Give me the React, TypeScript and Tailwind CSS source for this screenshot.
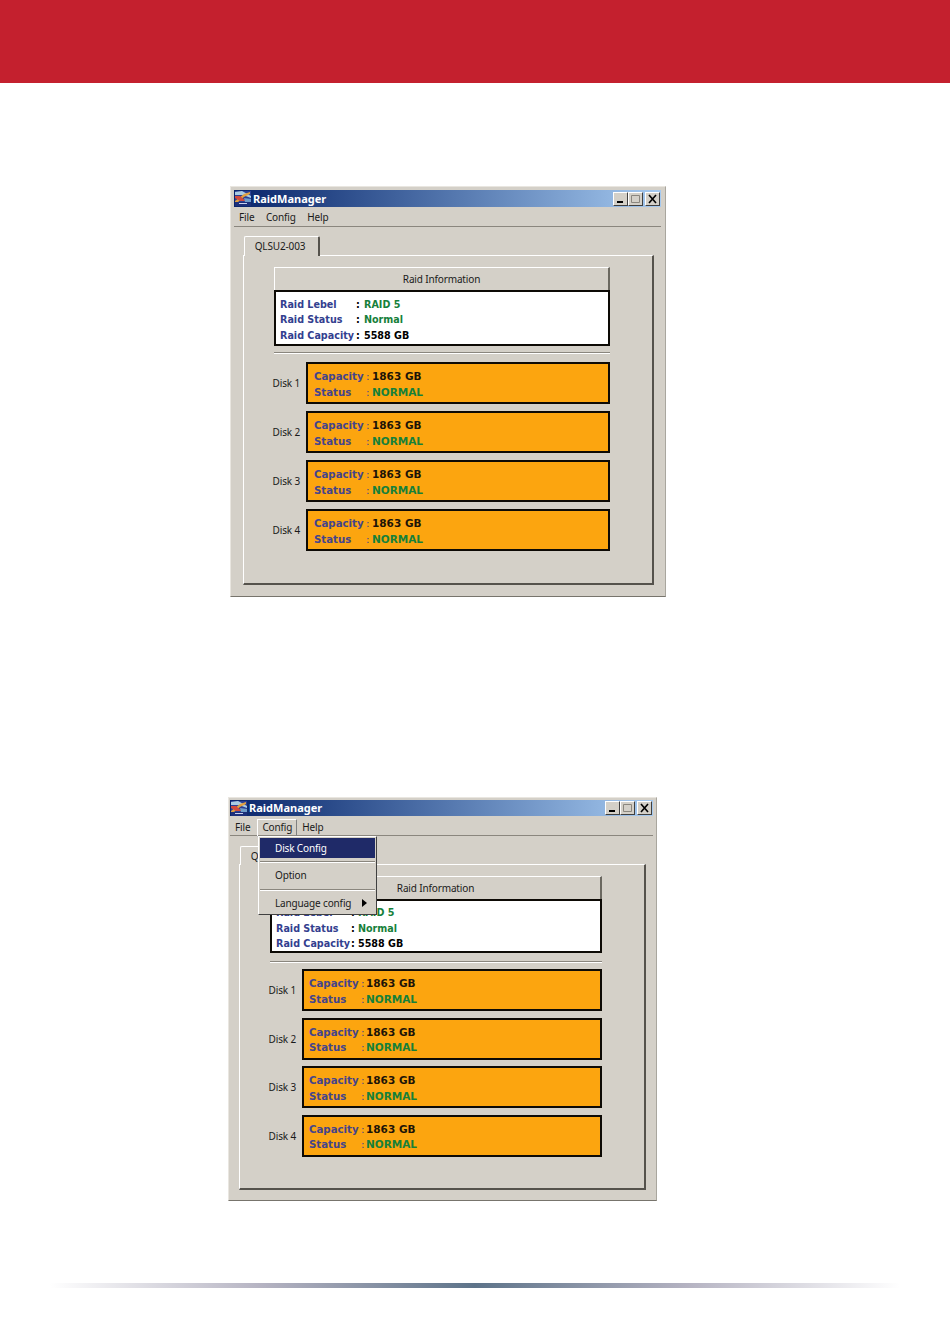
import React from "react";

type M = {
  outer: string; title: string; menu: string; menuItems: string; body: string; tab: string; panel: string;
  btn: string; info: string; infoGrid: string; sep: string; rows: string; box: string; boxGrid: string;
};

const A: M = {
  outer: "ml-[230px] mt-[103px] w-[436px] h-[411px] pt-[3px] pl-[3px] pr-[4px]",
  title: "h-[17px]",
  menu: "h-[19px] mt-[1px] pl-[5px]",
  menuItems: "gap-[11.5px]",
  body: "ml-[9px] mr-[7px] mt-[9px]",
  tab: "ml-[1px] w-[76px] h-[20px]",
  panel: "h-[330px] pl-[30px] pr-[10px] pt-[11px]",
  btn: "w-[336px] h-[23px]",
  info: "w-[336px] h-[56px] pl-[4px] pt-[4.5px]",
  infoGrid: "grid-cols-[76px_8px_1fr]",
  sep: "w-[336px] mt-[6px]",
  rows: "w-[336px] mt-[8px] gap-[7px]",
  box: "pl-[6px]",
  boxGrid: "grid-cols-[52px_6px_1fr]",
};

const B: M = {
  outer: "ml-[228px] mt-[200px] w-[429px] h-[404px] pt-[2px] pl-[1px] pr-[3px]",
  title: "h-[16px]",
  menu: "h-[18px] mt-[2px] pl-[5px] pt-[2px]",
  menuItems: "gap-[12px]",
  body: "ml-[9px] mr-[7px] mt-[10px]",
  tab: "ml-[1px] w-[76px] h-[19px]",
  panel: "h-[326px] pl-[30px] pr-[10px] pt-[11px]",
  btn: "w-[332px] h-[23px]",
  info: "w-[332px] h-[54px] pl-[4px] pt-[4px]",
  infoGrid: "grid-cols-[75px_7px_1fr]",
  sep: "w-[332px] mt-[8px]",
  rows: "w-[332px] mt-[6px] gap-[6.5px]",
  box: "pl-[5px]",
  boxGrid: "grid-cols-[52px_5px_1fr]",
};

const Logo = () => (
  <svg width="16" height="15" viewBox="0 0 16 15" className="shrink-0">
    <rect width="16" height="15" fill="#2a3f94" />
    <path d="M0 1 L7 0 L16 5 L16 7 L8 4 L0 4Z" fill="#a9cbe2" />
    <path d="M0 10 L9 3 L15 1 L15 3 L9 6 L3 11 L0 11Z" fill="#e0a040" />
    <path d="M0 5 L5 5 L11 10 L5 10 L0 7Z" fill="#d14a3c" />
    <path d="M9 7 L16 8 L16 11 L10 11Z" fill="#6f9dc8" />
    <rect x="0" y="11" width="16" height="4" fill="#1c2f7a" />
    <rect x="4" y="12" width="8" height="1" fill="#c8d0f0" />
  </svg>
);

const CapBtn = ({ kind }: { kind: "min" | "max" | "close" }) => (
  <div className="w-[15px] h-[14px] bg-[#d4d0c8] border-t border-l border-t-white border-l-white border-r border-b border-r-[#404040] border-b-[#404040] flex items-center justify-center">
    <svg width="11" height="10" viewBox="0 0 11 10">
      {kind === "min" && <rect x="2" y="7" width="6" height="2" fill="#000" />}
      {kind === "max" && <path d="M1.5 1.5h8v7h-8z" fill="none" stroke="#8a867e" />}
      {kind === "close" && <path d="M2 1 L9 9 M9 1 L2 9" stroke="#000" strokeWidth="1.6" />}
    </svg>
  </div>
);

const lf = "font-['DejaVu_Sans',sans-serif] font-bold whitespace-nowrap";
const ui = "font-['Noto_Sans',sans-serif] text-[10px] tracking-[-0.15px] text-[#1a1a1a] whitespace-nowrap";

const Disk = ({ n, m }: { n: number; m: M }) => (
  <div className="flex items-center h-[42px]">
    <div className={`${ui} flex justify-end w-[26px] mr-[6px] pt-[1px]`}>
      <span>Disk&nbsp;{n}</span>
    </div>
    <div className={`flex-1 h-[42px] bg-[#fca50f] border-2 border-[#0d0a05] pt-[5px] ${m.box}`}>
      <div className={`grid items-baseline text-[10.5px] leading-[15.5px] ${m.boxGrid} ${lf}`}>
        <span className="text-[#44448c] text-[10.2px]">Capacity</span>
        <span className="text-[#44448c] font-normal">:</span>
        <span className="text-[#1c1408]">1863 GB</span>
        <span className="text-[#44448c] text-[10.2px]">Status</span>
        <span className="text-[#44448c] font-normal">:</span>
        <span className="text-[#16803a]">NORMAL</span>
      </div>
    </div>
  </div>
);

const Menu = () => (
  <div className={`absolute left-[29px] top-[38px] w-[119px] h-[79px] bg-[#d4d0c8] border border-t-white border-l-white border-r-[#404040] border-b-[#404040] z-10 p-[1px] ${ui}`}>
    <div className="h-[20px] bg-[#1f2a68] text-white pl-[15px] flex items-center">Disk Config</div>
    <div className="mt-[3px] border-t border-t-[#8a867e] border-b border-b-white" />
    <div className="h-[22px] pl-[15px] mt-[1px] flex items-center">Option</div>
    <div className="mt-[3px] border-t border-t-[#8a867e] border-b border-b-white" />
    <div className="h-[22px] pl-[15px] mt-[1px] flex items-center justify-between pr-[8px]">
      <span>Language config</span>
      <svg width="5" height="8" viewBox="0 0 5 8"><path d="M0 0 L5 4 L0 8Z" fill="#000" /></svg>
    </div>
  </div>
);

const Win = ({ m, open }: { m: M; open?: boolean }) => (
  <div className={`relative bg-[#d4d0c8] border-t border-t-[#e9e6e0] border-l border-l-[#e9e6e0] border-r border-r-[#a9a69e] border-b border-b-[#77746c] ${m.outer}`}>
    <div className={`flex items-center pl-[1px] pr-[1px] bg-gradient-to-r from-[#0a246a] to-[#a6caf0] ${m.title}`}>
      <Logo />
      <span className="ml-[2px] mt-[1px] font-['Noto_Sans',sans-serif] font-bold text-[11px] text-white whitespace-nowrap">RaidManager</span>
      <div className="ml-auto flex items-center">
        <CapBtn kind="min" />
        <CapBtn kind="max" />
        <div className="w-[2px]" />
        <CapBtn kind="close" />
      </div>
    </div>
    <div className={`flex items-center border-b border-b-[#8a867e] ${m.menu} ${m.menuItems} ${ui}`}>
      <span>File</span>
      <span className={open ? "border border-t-white border-l-white border-r-[#808080] border-b-[#808080] px-[4px] -ml-[5px] -mr-[7px] h-[18px] flex items-center" : ""}>Config</span>
      <span>Help</span>
    </div>
    {open && <Menu />}
    <div className={m.body}>
      <div className={`relative z-[1] -mb-px bg-[#d4d0c8] border-t border-l border-t-white border-l-white border-r-2 border-r-[#55524c] flex items-center justify-center pr-[3px] rounded-t-[2px] ${m.tab} ${ui}`}>
        QLSU2-003
      </div>
      <div className={`border-t border-l border-t-white border-l-white border-r-2 border-b-2 border-r-[#55524c] border-b-[#55524c] ${m.panel}`}>
        <div className={`flex items-center justify-center bg-[#d4d0c8] border-t border-l border-t-white border-l-white border-r-2 border-r-[#6b6860] ${m.btn} ${ui}`}>
          Raid Information
        </div>
        <div className={`bg-white border-2 border-[#0d0a05] ${m.info}`}>
          <div className={`grid ${m.infoGrid} text-[9.6px] leading-[15.5px] ${lf}`}>
            <span className="text-[#33408f]">Raid Lebel</span><span className="text-black">:</span><span className="text-[#16803a]">RAID 5</span>
            <span className="text-[#33408f]">Raid Status</span><span className="text-black">:</span><span className="text-[#16803a]">Normal</span>
            <span className="text-[#33408f]">Raid Capacity</span><span className="text-black">:</span><span className="text-black">5588 GB</span>
          </div>
        </div>
        <div className={`border-t border-t-[#8a867e] border-b border-b-white ${m.sep}`} />
        <div className={`flex flex-col ${m.rows}`}>
          {[1, 2, 3, 4].map((n) => <Disk key={n} n={n} m={m} />)}
        </div>
      </div>
    </div>
  </div>
);

export default function App() {
  return (
    <div className="w-[950px] h-[1330px] bg-white overflow-hidden">
      <div className="h-[83px] bg-[#c4202e]" />
      <Win m={A} />
      <Win m={B} open />
      <div className="mt-[82px] mx-[50px] h-[5px] bg-[linear-gradient(to_right,#ffffff,#b5b3c2_25%,#5d7389_50%,#b5b3c2_75%,#ffffff)]" />
    </div>
  );
}
